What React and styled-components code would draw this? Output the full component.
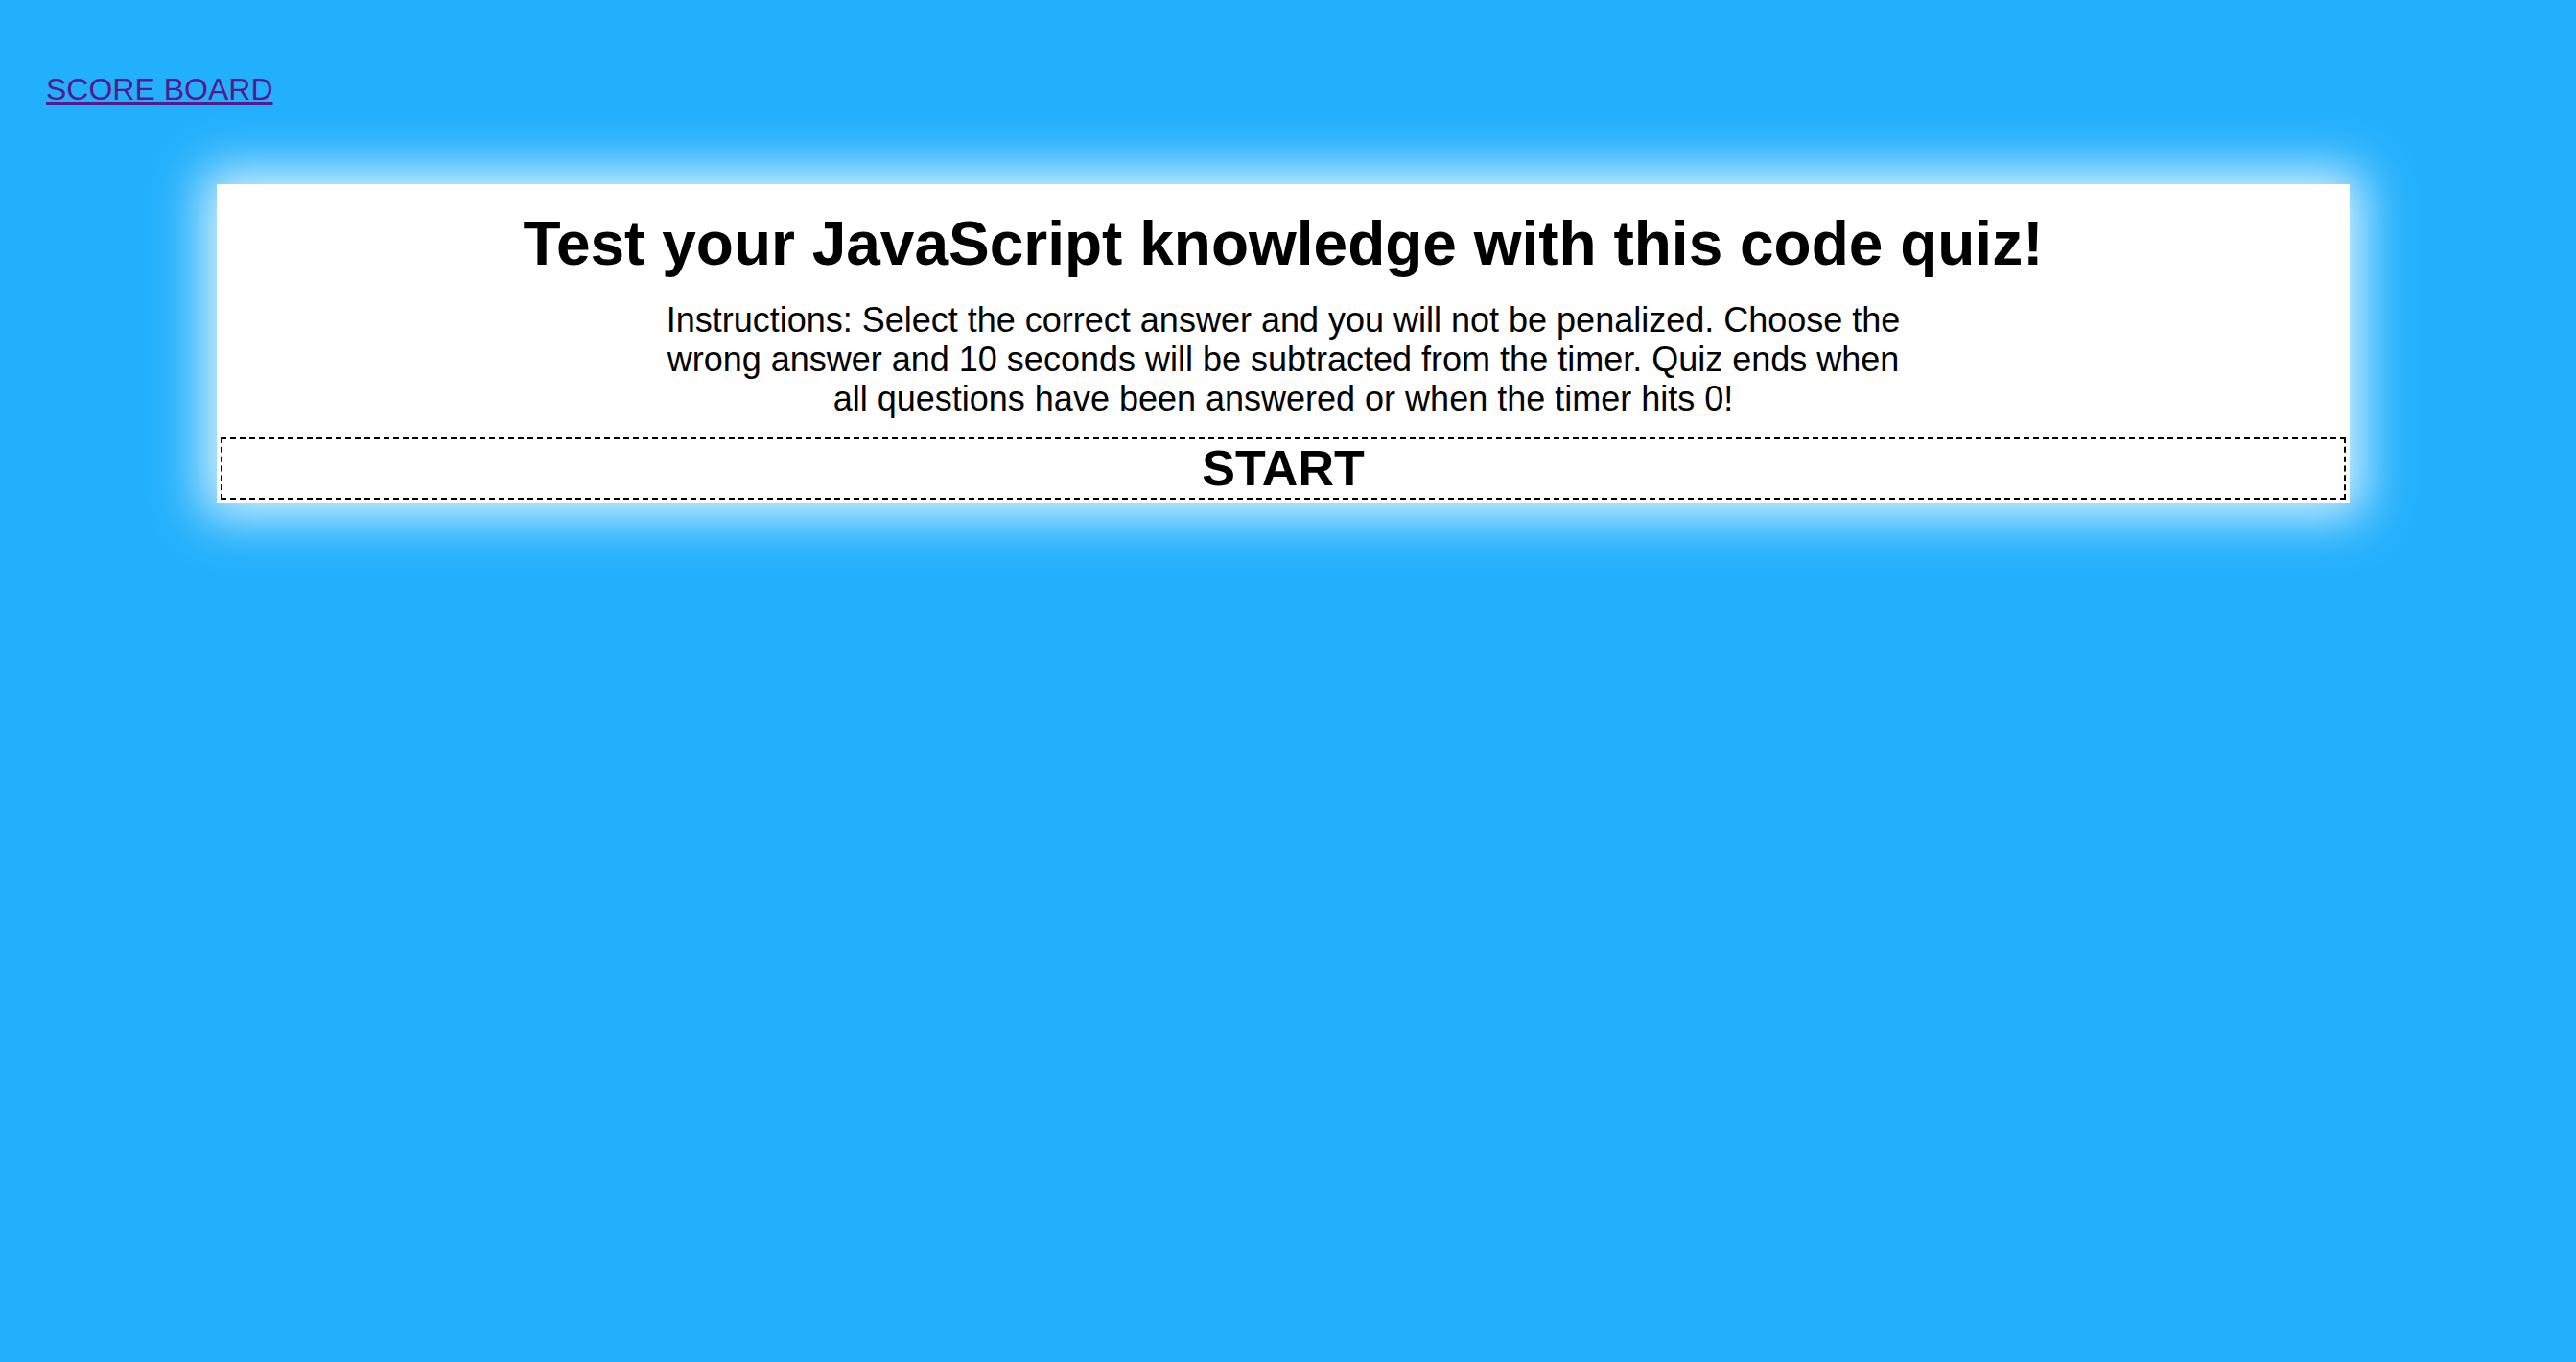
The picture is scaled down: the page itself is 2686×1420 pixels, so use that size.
import React from 'react';
import styled, { createGlobalStyle } from 'styled-components';

const GlobalStyle = createGlobalStyle`
    html, body {
        margin: 0;
        padding: 0;
        background: #22b0fc;
        font-family: "Liberation Sans", Arial, Helvetica, sans-serif;
        color: #000;
    }
`;

const Page = styled.div`
    min-height: 1420px;
    background: #22b0fc;
`;

const Header = styled.header`
    padding: 75px 0 0 48px;
    height: 192px;
    box-sizing: border-box;
    a {
        font-size: 32px;
        color: #551a8b;
        text-decoration: underline;
    }
`;

const Card = styled.section`
    margin: 0 236px 0 226px;
    background: #fff;
    box-shadow: 0 0 50px 14px rgba(255, 255, 255, 0.85);
    text-align: center;
    padding: 25px 4px 3px;
    display: flex;
    flex-direction: column;
    align-items: center;
`;

const Title = styled.h1`
    margin: 0;
    font-size: 64px;
    font-weight: bold;
`;

const Instructions = styled.p`
    margin: 22px 0 20px;
    max-width: 1305px;
    font-size: 36px;
    line-height: 41px;
`;

const StartButton = styled.button`
    align-self: stretch;
    border: 2px dashed #000;
    background: #fff;
    font-family: inherit;
    font-size: 52px;
    font-weight: bold;
    line-height: 61px;
    padding: 0;
    cursor: pointer;
`;

function App() {
    return (
        <>
            <GlobalStyle />
            <Page>
                <Header>
                    <a href="#scores">SCORE BOARD</a>
                </Header>
                <Card>
                    <Title>Test your JavaScript knowledge with this code quiz!</Title>
                    <Instructions>
                        Instructions: Select the correct answer and you will not be penalized. Choose the wrong answer and 10 seconds will be subtracted from the timer. Quiz ends when all questions have been answered or when the timer hits 0!
                    </Instructions>
                    <StartButton>START</StartButton>
                </Card>
            </Page>
        </>
    );
}

export default App;
